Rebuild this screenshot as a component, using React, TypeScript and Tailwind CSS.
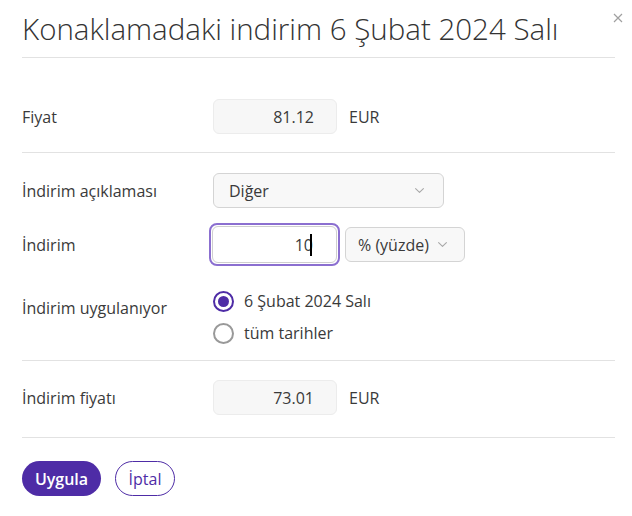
import React from "react";

const font = { fontFamily: '"Open Sans", "Noto Sans", sans-serif' };

function Chevron() {
  return (
    <svg width="9" height="5" viewBox="0 0 9 5" fill="none" className="text-[#a8a8a8]">
      <path d="M0.6 0.6l3.9 3.8 3.9-3.8" stroke="currentColor" strokeWidth="1.1" strokeLinecap="round" strokeLinejoin="round" />
    </svg>
  );
}

function Radio({ checked, label }: { checked?: boolean; label: string }) {
  return (
    <div className="flex items-center h-[20px]">
      <div
        className={
          "w-[21px] h-[21px] rounded-full border-2 flex items-center justify-center bg-white " +
          (checked ? "border-[#4e2ca6]" : "border-[#999]")
        }
      >
        {checked && <div className="w-[11px] h-[11px] rounded-full bg-[#4e2ca6]" />}
      </div>
      <span className="ml-[10px] text-[16px] text-[#3a3a3a] leading-[20px]">{label}</span>
    </div>
  );
}

export default function App() {
  return (
    <div className="relative w-[632px] h-[516px] bg-white text-[#3a3a3a]" style={font}>
      <button className="absolute left-[613px] top-[13px] w-[10px] h-[10px] flex items-center justify-center">
        <svg width="10" height="10" viewBox="0 0 10 10">
          <path d="M1 1l8 8M9 1l-8 8" stroke="#a0a0a0" strokeWidth="1.2" />
        </svg>
      </button>
      <div className="pl-[22px] pr-[17px]">
        <div className="pt-[11px] pb-[11px] border-b border-[#e2e2e2]">
          <h1 className="text-[29.5px] leading-[35px] font-light text-[#333]">
            Konaklamadaki indirim 6 Şubat 2024 Salı
          </h1>
        </div>

        <div className="pt-[41px] pb-[18px] border-b border-[#e2e2e2]">
          <div className="flex items-center">
            <div className="w-[191px] text-[16px]">Fiyat</div>
            <div className="w-[124px] h-[35px] rounded-[6px] bg-[#f7f7f7] border border-[#ececec] flex items-center justify-end pr-[22px] text-[16px]">
              81.12
            </div>
            <div className="ml-[12px] text-[16px]">EUR</div>
          </div>
        </div>

        <div className="pt-[20px] pb-[17px] border-b border-[#e2e2e2]">
          <div className="flex items-center">
            <div className="w-[191px] text-[16px]">İndirim açıklaması</div>
            <div className="w-[231px] h-[35px] rounded-[6px] bg-[#f8f8f8] border border-[#d4d4d4] flex items-center justify-between pl-[15px] pr-[19px] text-[16px]">
              <span>Diğer</span>
              <Chevron />
            </div>
          </div>
          <div className="flex items-center mt-[15px]">
            <div className="w-[187px] text-[16px]">İndirim</div>
            <div className="w-[131px] h-[43px] rounded-[8px] border-2 border-[#8b6fd0] p-[1px]">
              <div className="w-full h-full rounded-[6px] border border-[#cfcfcf] bg-white flex items-center justify-end pr-[24px] text-[16px]">
                <span>10</span>
                <span className="inline-block w-[2px] h-[22px] bg-black -ml-[3px]" />
              </div>
            </div>
            <div className="ml-[5px] w-[120px] h-[35px] rounded-[6px] bg-[#f8f8f8] border border-[#d4d4d4] flex items-center pl-[12px] text-[16px]">
              <span>% (yüzde)</span>
              <span className="ml-[9px] flex items-center">
                <Chevron />
              </span>
            </div>
          </div>
          <div className="flex items-start mt-[25px]">
            <div className="w-[191px] text-[16px] pt-[5px]">İndirim uygulanıyor</div>
            <div className="flex flex-col gap-[12px]">
              <Radio checked label="6 Şubat 2024 Salı" />
              <Radio label="tüm tarihler" />
            </div>
          </div>
        </div>

        <div className="pt-[19px] pb-[22px] border-b border-[#e2e2e2]">
          <div className="flex items-center">
            <div className="w-[191px] text-[16px]">İndirim fiyatı</div>
            <div className="w-[124px] h-[35px] rounded-[6px] bg-[#f7f7f7] border border-[#ececec] flex items-center justify-end pr-[22px] text-[16px]">
              73.01
            </div>
            <div className="ml-[12px] text-[16px]">EUR</div>
          </div>
        </div>

        <div className="pt-[23px] flex items-center gap-[14px]">
          <button className="h-[35px] w-[79px] rounded-full bg-[#4e2ca6] text-white text-[16px] font-semibold">
            Uygula
          </button>
          <button className="h-[35px] w-[60px] rounded-full border border-[#4e2ca6] text-[#4e2ca6] text-[16px] bg-white">
            İptal
          </button>
        </div>
      </div>
    </div>
  );
}
